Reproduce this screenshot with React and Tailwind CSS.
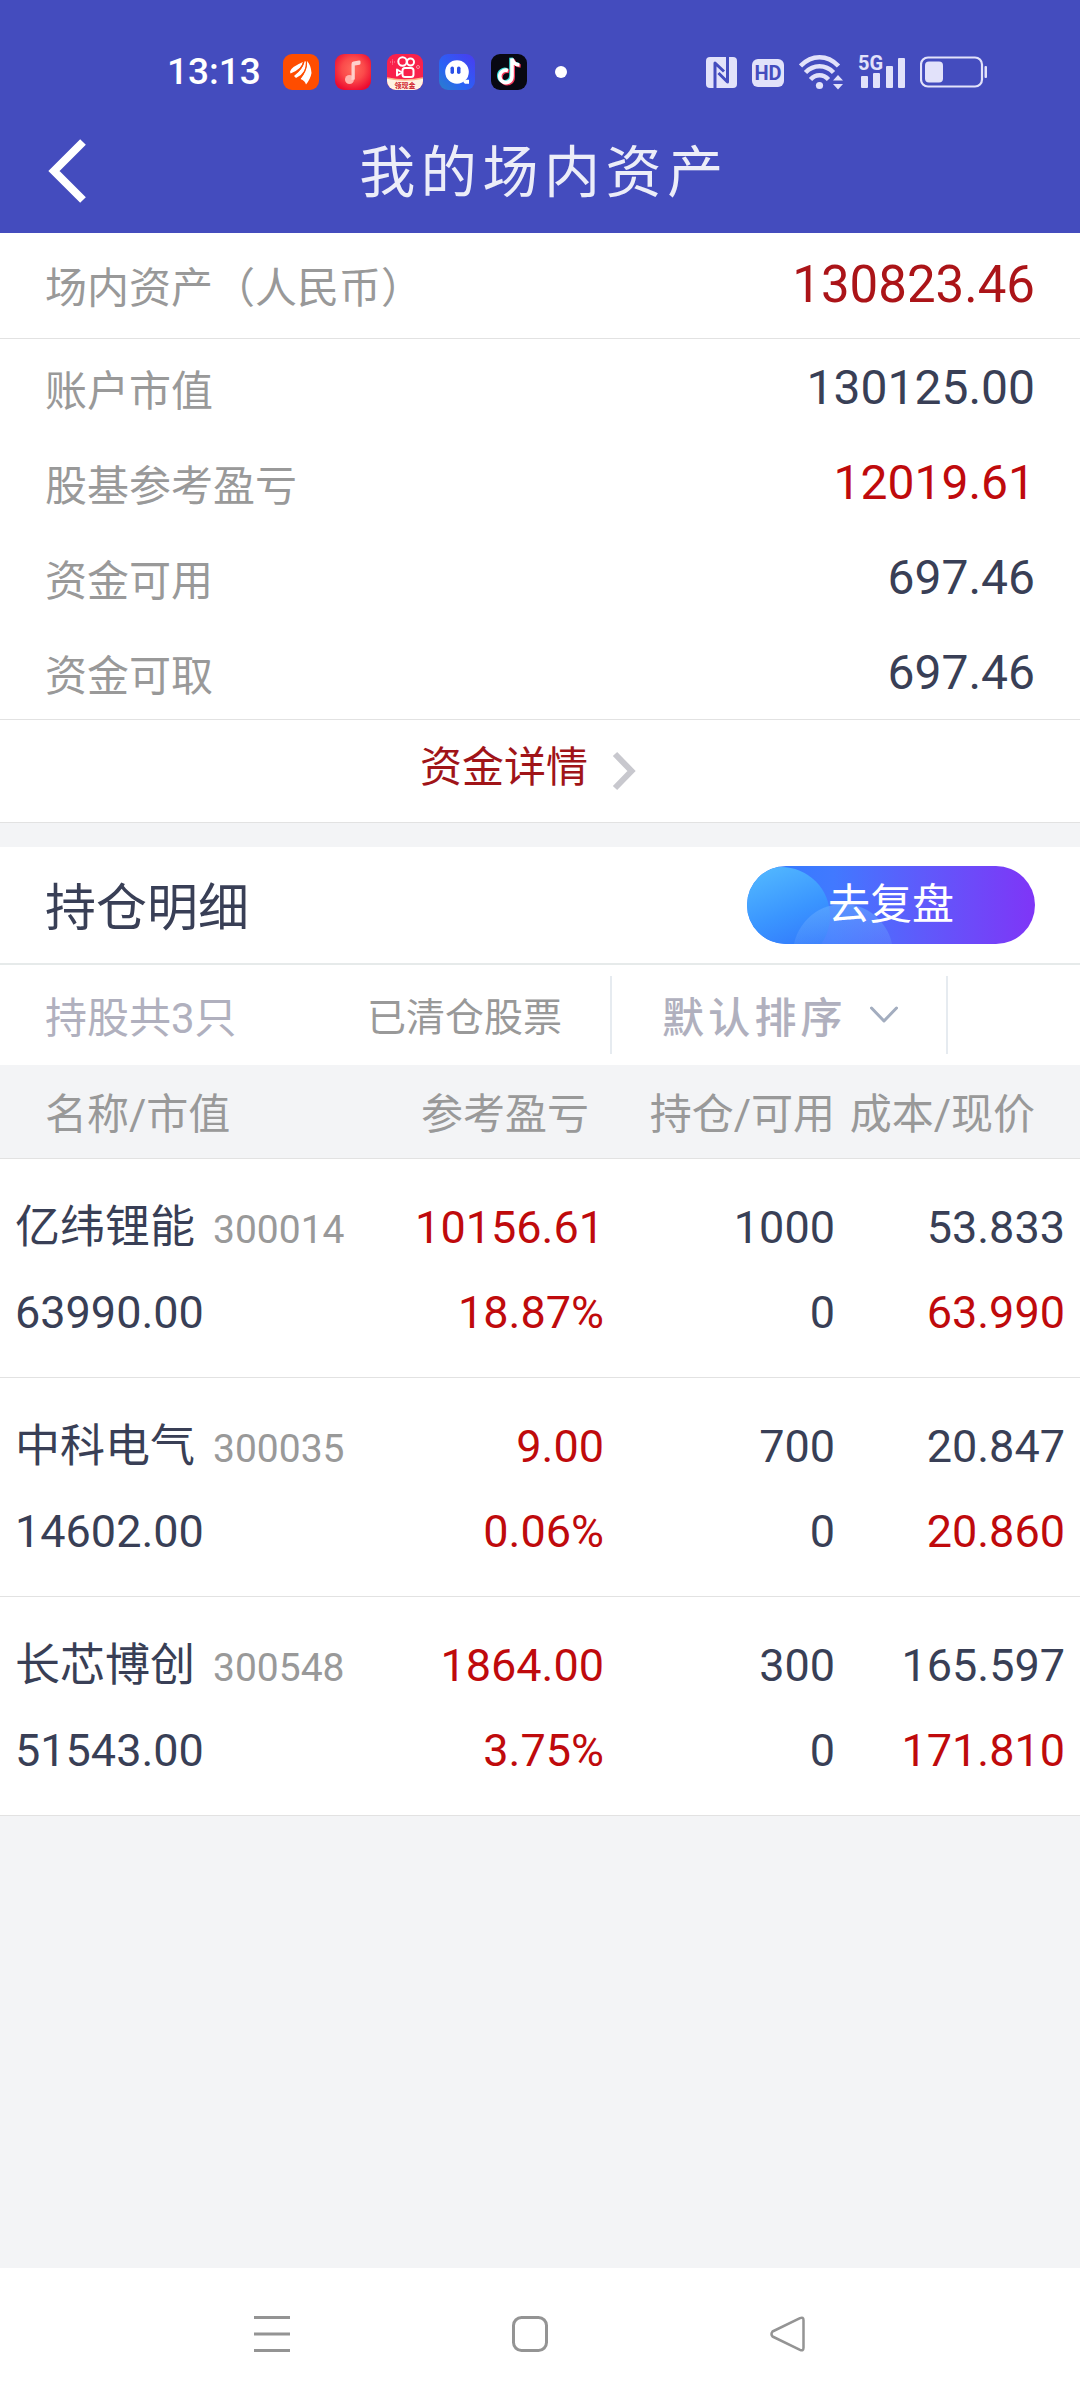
import React from 'react';

const summary = [
  { label: '账户市值', value: '130125.00' },
  { label: '股基参考盈亏', value: '12019.61', up: true },
  { label: '资金可用', value: '697.46' },
  { label: '资金可取', value: '697.46' },
];

const holdings = [
  {
    name: '亿纬锂能',
    code: '300014',
    marketValue: '63990.00',
    profit: '10156.61',
    rate: '18.87%',
    amount: '1000',
    available: '0',
    cost: '53.833',
    price: '63.990',
  },
  {
    name: '中科电气',
    code: '300035',
    marketValue: '14602.00',
    profit: '9.00',
    rate: '0.06%',
    amount: '700',
    available: '0',
    cost: '20.847',
    price: '20.860',
  },
  {
    name: '长芯博创',
    code: '300548',
    marketValue: '51543.00',
    profit: '1864.00',
    rate: '3.75%',
    amount: '300',
    available: '0',
    cost: '165.597',
    price: '171.810',
  },
];

const AppIcons = () => (
  <div className="flex gap-4">
    {/* Naranja: alas */}
    <svg className="w-9 h-9" viewBox="0 0 36 36">
      <rect width="36" height="36" rx="9" fill="#ff4d00" />
      <path d="M7 17.500Q8 13 20 8q-1 7-12.500 11.500z" fill="#fff" />
      <path d="M11 22Q20 15 21.500 7.500h1.500Q24 19 13 24z" fill="#fff" />
      <path d="M17.500 25Q24 16 24 7q4 4 4.500 12-1 6-5.500 11.500-1-4-5.500-5.500z" fill="#fff" />
      <path d="M10.500 20.500Q19 15 20.800 8M16.500 25Q24 17 23.500 8" fill="none" stroke="#ff4d00" strokeWidth="1.200" />
    </svg>

    {/* Música */}
    <svg className="w-9 h-9" viewBox="0 0 36 36">
      <defs>
        <radialGradient id="music" cx="50%" cy="42%" r="62%">
          <stop offset="0" stopColor="#ff6a5c" />
          <stop offset="0.5" stopColor="#fb4a4a" />
          <stop offset="1" stopColor="#ec0a30" />
        </radialGradient>
      </defs>
      <rect width="36" height="36" rx="9" fill="url(#music)" />
      <circle cx="14.500" cy="25.500" r="4.500" fill="#ffb3ad" />
      <path d="M16.500 26V10q0-2 2-2.400L24 6.500q1.500-.3 1.500 1.200v1.800q0 1-1 1.200l-4.700.9v14z" fill="#ffd0cb" />
    </svg>

    {/* Cámara */}
    <svg className="w-9 h-9" viewBox="0 0 36 36">
      <defs>
        <clipPath id="camClip">
          <rect width="36" height="36" rx="9" />
        </clipPath>
      </defs>
      <g clipPath="url(#camClip)">
        <rect width="36" height="36" fill="#f9214b" />
        <path d="M0 24q18 4 36 0v12H0z" fill="#fff3e2" />
        <path d="M0 24q18 4 36 0" fill="none" stroke="#ffb38a" strokeWidth="1.500" />
        <g fill="none" stroke="#fff" strokeWidth="2">
          <circle cx="15.500" cy="7.500" r="4.200" />
          <circle cx="23.500" cy="8" r="3.500" />
          <rect x="15.500" y="14" width="11" height="9" rx="2.500" />
          <path d="M10 15.500l5 3-5 3z" strokeLinejoin="round" />
        </g>
        <path d="M3 8h5M5.500 5.500v5" stroke="#ff8ba0" strokeWidth="1" strokeDasharray="1 1" />
        <circle cx="31" cy="13" r="1.500" fill="none" stroke="#ff8ba0" />
        <text x="18" y="34" textAnchor="middle" fontSize="7" fontWeight="700" fill="#d0202c">
          领现金
        </text>
      </g>
    </svg>

    {/* Chat */}
    <svg className="w-9 h-9" viewBox="0 0 36 36">
      <defs>
        <linearGradient id="chat" x1="0" y1="1" x2="1" y2="0">
          <stop offset="0" stopColor="#2a80c8" />
          <stop offset="0.4" stopColor="#2a62f5" />
          <stop offset="1" stopColor="#4a3bf0" />
        </linearGradient>
      </defs>
      <rect width="36" height="36" rx="9" fill="url(#chat)" />
      <circle cx="18" cy="18" r="11.800" fill="#fff" />
      <path d="M17 29.800h9q-2-1-1.500-3l3-1h2.500v4h-5z" fill="#fff" />
      <rect x="11.500" y="12.500" width="3.500" height="7.500" rx="1.800" fill="#2a50e8" />
      <rect x="18" y="12.500" width="3.500" height="7.500" rx="1.800" fill="#2a50e8" />
    </svg>

    {/* Nota con sombra de color */}
    <svg className="w-9 h-9" viewBox="0 0 36 36">
      <rect width="36" height="36" rx="9" fill="#080812" />
      <g fill="none" strokeWidth="3.600">
        <path d="M17 16.500a6.200 6.200 0 1 0 .500 11.500q3.500-1.500 3.500-6V4.500q.8 6 7.500 6.500" transform="translate(-1 -.8)" stroke="#35e0dc" />
        <path d="M17 16.500a6.200 6.200 0 1 0 .500 11.500q3.500-1.500 3.500-6V4.500q.8 6 7.500 6.500" transform="translate(1.200 1)" stroke="#f0385a" />
        <path d="M17 16.500a6.200 6.200 0 1 0 .500 11.500q3.500-1.500 3.500-6V4.500q.8 6 7.500 6.500" stroke="#fff" />
      </g>
    </svg>
  </div>
);

const SystemIcons = () => (
  <div className="flex items-center gap-[15px] text-[#e2e2fa]">
    {/* NFC */}
    <svg className="w-[31px] h-[31px]" viewBox="0 0 31 31">
      <rect width="31" height="31" rx="4" fill="currentColor" />
      <path
        d="M9 31V6l9 8.500M21.500 0v25L12.500 16"
        fill="none"
        stroke="#444cbe"
        strokeWidth="3"
        strokeLinejoin="round"
      />
    </svg>

    <span className="w-8 h-7 mt-[2px] rounded-md bg-[#e2e2fa] text-[#444cbe] text-[20px] leading-7 font-bold text-center font-['Liberation_Sans_Narrow','Roboto',sans-serif]">
      HD
    </span>

    {/* Wifi */}
    <svg className="w-11 h-9" viewBox="0 0 44 36">
      <g fill="none" stroke="currentColor" strokeWidth="4.600">
        <path d="M1.500 12Q10 3.300 20.500 3.300T39.500 12" />
        <path d="M6.500 18.500Q12.500 12.300 20.500 12.300T34.500 18.500" />
        <path d="M11.500 25.500Q15.500 21.300 20.500 21.300T29.500 25.500" />
      </g>
      <circle cx="20.500" cy="31.500" r="3.600" fill="currentColor" />
      <path d="M39 21l5 5.500H34zM39 35.500l5-5.500H34z" fill="currentColor" />
    </svg>

    {/* Señal */}
    <div className="relative w-[47px] h-9">
      <span className="absolute left-0 top-0 text-[20px] leading-[18px] font-bold font-['Liberation_Sans_Narrow','Roboto',sans-serif]">
        5G
      </span>
      <svg className="w-full h-full" viewBox="0 0 47 36">
        <g fill="currentColor">
          <rect x="3" y="22" width="7" height="12" rx="1" />
          <rect x="15" y="19" width="7" height="15" rx="1" />
          <rect x="28" y="12" width="7" height="22" rx="1" />
          <rect x="40" y="4" width="7" height="30" rx="1" />
        </g>
      </svg>
    </div>

    {/* Batería */}
    <svg className="w-[67px] h-8" viewBox="0 0 67 32">
      <rect x="1" y="1.500" width="61" height="29" rx="7" fill="none" stroke="currentColor" strokeWidth="2.200" />
      <rect x="5" y="5.500" width="18" height="21" rx="4" fill="currentColor" />
      <rect x="64.500" y="10" width="2.500" height="12" rx="1" fill="currentColor" />
    </svg>
  </div>
);

const Header = () => (
  <header className="bg-[#444cbe] text-white">
    <div className="flex items-center justify-between pt-[54px] pb-5 pl-[167px] pr-[93px]">
      <div className="flex items-center">
        <span className="text-[37px] leading-9 font-medium mr-[22px]">13:13</span>
        <AppIcons />
        <span className="w-3 h-3 ml-7 rounded-full bg-white" />
      </div>
      <SystemIcons />
    </div>

    <div className="flex items-center h-[123px]">
      <button type="button" aria-label="返回" className="w-[136px] pb-[2px] pl-12">
        <svg className="w-10 h-16" viewBox="0 0 40 64">
          <path d="M35 3L6 32l29 29" fill="none" stroke="#fff" strokeWidth="8" />
        </svg>
      </button>
      <h1 className="flex-1 pt-[3px] text-center text-[56px] leading-[64px] tracking-widest text-white/90">
        我的场内资产
      </h1>
      <div className="w-32" />
    </div>
  </header>
);

const Summary = () => (
  <section className="bg-white border-b border-[#e2e2e2]">
    <div className="flex items-center justify-between h-[106px] px-[45px] border-b border-[#e2e2e2]">
      <span className="pt-1.5 text-[42px] text-[#999]">场内资产（人民币）</span>
      <span className="text-[51px] text-[#ab1418]">130823.46</span>
    </div>

    <dl className="border-b border-[#e2e2e2]">
      {summary.map((item) => (
        <div key={item.label} className="flex items-center justify-between h-[95px] pt-[3px] px-[45px]">
          <dt className="pt-1.5 text-[42px] text-[#999]">{item.label}</dt>
          <dd className={item.up ? 'text-[48px] text-[#bf0a0c]' : 'text-[48px] text-[#393f56]'}>
            {item.value}
          </dd>
        </div>
      ))}
    </dl>

    <a href="#detalle" className="flex items-center justify-center gap-6 h-[102px] pr-6 text-[42px] text-[#a01418]">
      <span className="pb-2">资金详情</span>
      <svg className="w-6 h-10" viewBox="0 0 24 40">
        <path d="M3 3l16.500 17L3 37" fill="none" stroke="#c8c8ce" strokeWidth="6" />
      </svg>
    </a>
  </section>
);

const ReviewButton = () => (
  <button type="button" className="relative w-72 h-[78px] rounded-full overflow-hidden text-white">
    <svg className="absolute inset-0 w-full h-full" viewBox="0 0 288 78" preserveAspectRatio="none">
      <defs>
        <linearGradient id="pill" x1="0" y1="0" x2="1" y2="0">
          <stop offset="0" stopColor="#2f7cff" />
          <stop offset="0.3" stopColor="#4179ff" />
          <stop offset="0.6" stopColor="#5e5bfb" />
          <stop offset="1" stopColor="#7f35f7" />
        </linearGradient>
        <linearGradient id="bubble" x1="0.3" y1="0" x2="0.7" y2="1">
          <stop offset="0" stopColor="#52b8ff" />
          <stop offset="0.5" stopColor="#3a95ff" />
          <stop offset="1" stopColor="#2f70fb" />
        </linearGradient>
        <linearGradient id="bubbleSmall" x1="0" y1="0" x2="0" y2="1">
          <stop offset="0" stopColor="#6fb4ff" stopOpacity="0.5" />
          <stop offset="0.6" stopColor="#6fa0ff" stopOpacity="0.1" />
        </linearGradient>
      </defs>
      <rect width="288" height="78" fill="url(#pill)" />
      <circle cx="34" cy="50" r="49" fill="url(#bubble)" />
      <circle cx="96" cy="88" r="50" fill="url(#bubbleSmall)" />
    </svg>
    <span className="relative text-[42px] leading-[78px]">去复盘</span>
  </button>
);

const Toolbar = () => (
  <div className="flex items-center h-[100px] pl-[45px]">
    <span className="flex-1 pt-1.5 text-[42px] text-[#b0b0be]">持股共3只</span>
    <a href="#liquidadas" className="pt-1.5 pr-12 text-[39px] text-[#999]">
      已清仓股票
    </a>
    <div className="relative flex items-center w-[338px] h-[78px] border-x-2 border-[#e6ebf0]">
      <select
        aria-label="排序"
        className="appearance-none w-full h-full pt-1.5 pl-[50px] bg-transparent text-[42px] font-medium tracking-widest text-[#b0b0be]"
      >
        <option>默认排序</option>
      </select>
      <svg className="absolute right-12 top-[30px] w-7 h-[18px] pointer-events-none" viewBox="0 0 28 18">
        <path
          d="M1.500 2L14 15 26.500 2"
          fill="none"
          stroke="#a3adbf"
          strokeWidth="3"
          strokeLinecap="round"
          strokeLinejoin="round"
        />
      </svg>
    </div>
    <div className="w-[132px]" />
  </div>
);

const Holdings = () => (
  <section className="mt-6 bg-white">
    <div className="flex items-center justify-between h-[118px] px-[45px] border-b-2 border-[#e6eaea]">
      <h2 className="pt-2 text-[51px] text-[#393f56]">持仓明细</h2>
      <ReviewButton />
    </div>

    <Toolbar />

    <table className="w-full table-fixed text-[45px] text-right text-[#393f56]">
      <thead>
        <tr className="h-[93px] bg-[#f3f4f6] border-b border-[#e2e2e2] text-[42px] text-[#999] whitespace-nowrap">
          <th className="pt-1.5 pl-[45px] font-normal text-left">名称/市值</th>
          <th className="w-[230px] pt-1.5 pr-[15px] font-normal">参考盈亏</th>
          <th className="w-[231px] pt-1.5 font-normal">持仓/可用</th>
          <th className="w-[245px] pt-1.5 pr-[45px] font-normal">成本/现价</th>
        </tr>
      </thead>
      <tbody>
        {holdings.map((stock) => (
          <tr key={stock.code} className="border-b border-[#e2e2e2] leading-[85px]">
            <td className="pl-[15px] pt-[26px] pb-[22px] text-left whitespace-nowrap">
              <div className="flex items-baseline gap-[18px] h-[85px]">
                <span>{stock.name}</span>
                <span className="text-[39px] text-[#999]">{stock.code}</span>
              </div>
              <div>{stock.marketValue}</div>
            </td>
            <td className="pt-[26px] pb-[22px] text-[#bf0a0c]">
              <div>{stock.profit}</div>
              <div>{stock.rate}</div>
            </td>
            <td className="pt-[26px] pb-[22px]">
              <div>{stock.amount}</div>
              <div>{stock.available}</div>
            </td>
            <td className="pt-[26px] pb-[22px] pr-[15px]">
              <div>{stock.cost}</div>
              <div className="text-[#bf0a0c]">{stock.price}</div>
            </td>
          </tr>
        ))}
      </tbody>
    </table>
  </section>
);

const NavBar = () => (
  <nav className="flex items-center justify-center gap-[222px] h-[132px] pr-5 bg-white">
    <button type="button" aria-label="菜单">
      <svg className="w-9 h-9" viewBox="0 0 36 36">
        <path d="M0 1.500h36M0 18h36M0 34.500h36" stroke="#949494" strokeWidth="3" />
      </svg>
    </button>
    <button type="button" aria-label="主页">
      <svg className="w-9 h-9" viewBox="0 0 36 36">
        <rect x="1.500" y="1.500" width="33" height="33" rx="8" fill="none" stroke="#949494" strokeWidth="3" />
      </svg>
    </button>
    <button type="button" aria-label="后退">
      <svg className="w-9 h-9" viewBox="0 0 36 36">
        <path
          d="M2.500 15.500L30 2.200q3.500-1.500 3.500 2v27.600q0 3.500-3.500 2L2.500 20.500q-2-2.500 0-5z"
          fill="none"
          stroke="#949494"
          strokeWidth="2.500"
          strokeLinejoin="round"
        />
      </svg>
    </button>
  </nav>
);

const App = () => {
  return (
    <div
      lang="zh-CN"
      className="flex flex-col min-h-screen bg-[#f3f4f6] font-['Roboto','Noto_Sans_CJK_SC',sans-serif]"
    >
      <Header />
      <main className="flex-1">
        <Summary />
        <Holdings />
      </main>
      <NavBar />
    </div>
  );
};

export default App;
